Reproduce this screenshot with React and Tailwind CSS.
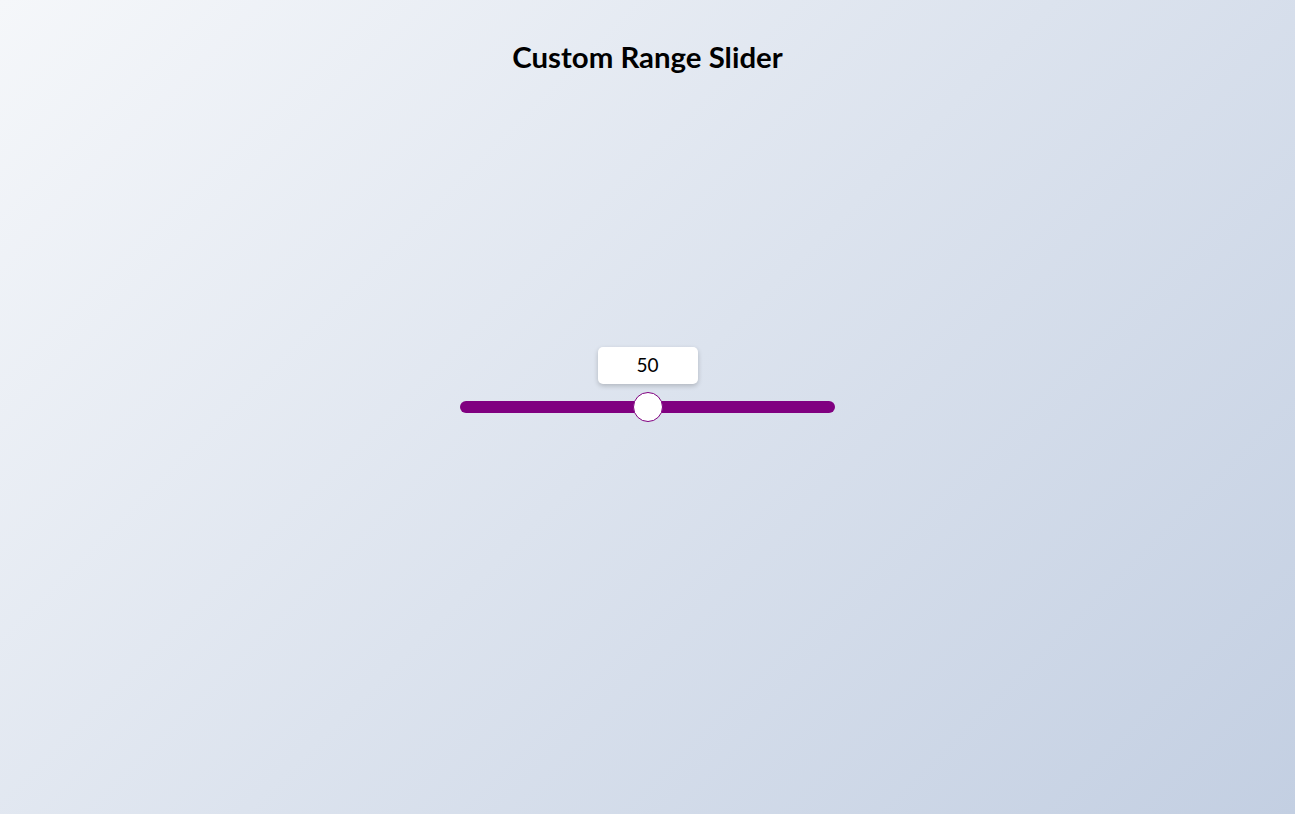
import React from "react";

export default function App() {
  const value = 50;
  return (
    <div
      className="min-h-screen w-full grid grid-rows-[1fr_auto_1fr] bg-[linear-gradient(135deg,#f5f7fa_0%,#c3cfe2_100%)]"
      style={{ fontFamily: "Lato, 'Open Sans', sans-serif" }}
    >
      <div className="flex justify-center items-start pt-[39px]">
        <h1 className="text-[29.4px] font-bold text-black leading-[1.2]">Custom Range Slider</h1>
      </div>
      <div className="flex justify-center">
        <div className="relative w-[375px] h-[30px] flex items-center">
          <div className="w-full h-3 rounded-[6px] bg-[#800080]" />
          <div
            className="absolute top-0 w-[30px] h-[30px] -ml-[15px] rounded-full bg-white border border-[#800080]"
            style={{ left: `${value}%` }}
          />
          <div
            className="absolute bottom-[38px] w-[100px] h-[37px] -ml-[50px] rounded-[5px] bg-white shadow-[0_2px_5px_rgba(0,0,0,0.2)] flex items-center justify-center text-[19px] text-black"
            style={{ left: `${value}%` }}
          >
            {value}
          </div>
        </div>
      </div>
      <div />
    </div>
  );
}
